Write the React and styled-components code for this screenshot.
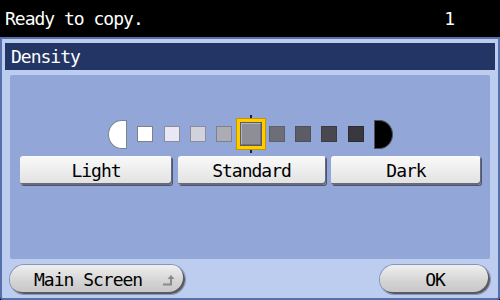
import React from "react";
import styled, { createGlobalStyle } from "styled-components";

const Global = createGlobalStyle`
  html, body { margin: 0; padding: 0; background: #000; }
  body { width: 500px; height: 300px; overflow: hidden; }
  * { box-sizing: border-box; }
`;

const Screen = styled.div`
  width: 500px;
  height: 300px;
  display: flex;
  flex-direction: column;
  font-family: "DejaVu Sans Mono", "Liberation Mono", monospace;
  font-size: 18px;
  font-weight: 500;
  letter-spacing: -1px;
`;

const StatusBar = styled.div`
  height: 37px;
  flex: none;
  background: #000;
  color: #fff;
  display: flex;
  align-items: center;
  justify-content: space-between;
  padding: 0 46px 0 5px;
`;

const Frame = styled.div`
  flex: 1;
  display: flex;
  flex-direction: column;
  background: #bccdf0;
  border: 2px solid #5670ac;
  border-radius: 0 0 3px 3px;
  padding: 4px 3px 4px 3px;
`;

const TitleBar = styled.div`
  height: 27px;
  flex: none;
  background: #233564;
  color: #fff;
  display: flex;
  align-items: center;
  padding: 0 6px;
`;

const Panel = styled.div`
  margin: 5px 5px 0;
  height: 184px;
  flex: none;
  background: #92a6d8;
  border-radius: 2px;
  display: flex;
  flex-direction: column;
  align-items: stretch;
  padding: 43px 9px 0 10px;
`;

const Scale = styled.div`
  height: 32px;
  display: flex;
  align-items: center;
  justify-content: center;
  gap: 10.3px;
`;

const Moon = styled.div`
  width: 19px;
  height: 29px;
  background: ${(p) => (p.$dark ? "#000" : "#fff")};
  border: 1px solid ${(p) => (p.$dark ? "#50505a" : "#7c8494")};
  border-radius: ${(p) => (p.$dark ? "0 14px 14px 0 / 0 15px 15px 0" : "14px 0 0 14px / 15px 0 0 15px")};
`;

const Square = styled.div`
  width: 16px;
  height: 16px;
  background: ${(p) => p.$c};
  border: 1px solid ${(p) => p.$b};
`;

const Selected = styled.div`
  position: relative;
  width: 28px;
  height: 30px;
  margin: 0 -6px;
  border: 3px solid #ffcc00;
  box-shadow: 0 0 0 1px #c89400;
  background: #8e8e96;
  outline: 1px solid #5c5c66;
  outline-offset: -4px;
  &::before,
  &::after {
    content: "";
    position: absolute;
    left: 50%;
    margin-left: -1px;
    width: 2px;
    height: 3px;
    background: #202030;
  }
  &::before { top: -7px; }
  &::after { bottom: -7px; }
`;

const Inner = styled.div`
  position: absolute;
  inset: 1px;
  border-top: 1px solid #b4b4bc;
  border-left: 1px solid #b4b4bc;
  border-right: 1px solid #70707a;
  border-bottom: 1px solid #70707a;
`;

const Choices = styled.div`
  margin-top: 6px;
  display: grid;
  grid-template-columns: 152px 148px 150px;
  justify-content: space-between;
`;

const Choice = styled.button`
  height: 29px;
  font: inherit;
  letter-spacing: inherit;
  color: #000;
  background: linear-gradient(#fafafa, #e0e0e0);
  border: none;
  border-radius: 3px;
  box-shadow: inset -1px -2px 0 #6a6a78, 1px 1px 0 #4a5478;
  padding: 0;
  display: flex;
  align-items: center;
  justify-content: center;
`;

const Footer = styled.div`
  margin-top: 6px;
  padding: 0 5px;
  display: flex;
  justify-content: space-between;
`;

const Pill = styled.button`
  width: ${(p) => p.$w}px;
  height: 29px;
  font: inherit;
  letter-spacing: inherit;
  color: #000;
  border: none;
  border-radius: 15px;
  background: linear-gradient(#efefef, #d2d2d2 60%, #c6c6c6);
  box-shadow: inset -2px -2px 0 #5a5a66, 0 0 0 1px #8894b4;
  display: flex;
  align-items: center;
  justify-content: ${(p) => (p.$left ? "space-between" : "center")};
  padding: ${(p) => (p.$left ? "0 9px 0 24px" : "0")};
`;

const squares = [
  ["#ffffff", "#808088"],
  ["#e8e8f4", "#8c8c98"],
  ["#d2d2dc", "#8c8c98"],
  ["#acacb4", "#80808a"],
];
const darks = [
  ["#6e6e78", "#60606a"],
  ["#5c5c66", "#50505a"],
  ["#48484e", "#3c3c44"],
  ["#38383e", "#2c2c34"],
];

export default function App() {
  return (
    <>
      <Global />
      <Screen>
        <StatusBar>
          <span>Ready to copy.</span>
          <span>1</span>
        </StatusBar>
        <Frame>
          <TitleBar>Density</TitleBar>
          <Panel>
            <Scale>
              <Moon />
              {squares.map(([c, b], i) => (
                <Square key={"l" + i} $c={c} $b={b} />
              ))}
              <Selected>
                <Inner />
              </Selected>
              {darks.map(([c, b], i) => (
                <Square key={"d" + i} $c={c} $b={b} />
              ))}
              <Moon $dark />
            </Scale>
            <Choices>
              <Choice>Light</Choice>
              <Choice>Standard</Choice>
              <Choice>Dark</Choice>
            </Choices>
          </Panel>
          <Footer>
            <Pill $w={175} $left>
              <span>Main Screen</span>
              <svg width="14" height="12" viewBox="0 0 14 12">
                <path d="M1 10.5 H9 V4" fill="none" stroke="#8a8a8a" strokeWidth="2" />
                <path d="M5.5 5 L9 1 L12.5 5 Z" fill="#8a8a8a" />
              </svg>
            </Pill>
            <Pill $w={110}>OK</Pill>
          </Footer>
        </Frame>
      </Screen>
    </>
  );
}
